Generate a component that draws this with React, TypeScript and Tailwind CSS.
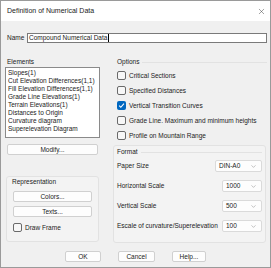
import { ChevronDown, X } from "lucide-react";

const elements = [
  "Slopes(1)",
  "Cut Elevation Differences(1,1)",
  "Fill Elevation Differences(1,1)",
  "Grade Line Elevations(1)",
  "Terrain Elevations(1)",
  "Distances to Origin",
  "Curvature diagram",
  "Superelevation Diagram",
];

const options = [
  { label: "Critical Sections", checked: false },
  { label: "Specified Distances", checked: false },
  { label: "Vertical Transition Curves", checked: true },
  { label: "Grade Line. Maximum and minimum heights", checked: false },
  { label: "Profile on Mountain Range", checked: false },
];

const formats = [
  { label: "Paper Size", value: "DIN-A0", wide: true },
  { label: "Horizontal Scale", value: "1000" },
  { label: "Vertical Scale", value: "500" },
  { label: "Escale of curvature/Superelevation", value: "100" },
];

function Check({ checked }: { checked?: boolean }) {
  if (checked) {
    return (
      <span className="flex h-[9px] w-[9px] shrink-0 items-center justify-center rounded-[2px] bg-[#0067c0]">
        <svg width="7" height="7" viewBox="0 0 8 8">
          <path d="M1.3 4.2 3.2 6 6.8 1.8" fill="none" stroke="white" strokeWidth="1.2" />
        </svg>
      </span>
    );
  }
  return <span className="h-[9px] w-[9px] shrink-0 rounded-[2px] border border-[#6a6a6a] bg-[#f7f7f7]" />;
}

function Button({ label, className }: { label: string; className: string }) {
  return (
    <div
      className={`flex items-center justify-center rounded-[2px] border border-[#d0d0d0] bg-[#fdfdfd] ${className}`}
    >
      {label}
    </div>
  );
}

function Select({ value, wide }: { value: string; wide?: boolean }) {
  return (
    <div
      className={`flex h-[12px] items-center justify-between rounded-[2px] border border-[#dadada] bg-[#fdfdfd] pl-[3px] pr-[4px] ${
        wide ? "w-[47px]" : "w-[40px]"
      }`}
    >
      <span>{value}</span>
      <ChevronDown size={7} strokeWidth={1.5} color="#777" />
    </div>
  );
}

export default function App() {
  return (
    <div
      className="flex h-[268px] w-[271px] flex-col overflow-hidden border border-[#9a9a9a] bg-[#f0f0f0] text-[6.5px] leading-[8px] text-[#222]"
      style={{ fontFamily: '"Liberation Sans", Arial, sans-serif' }}
    >
      {/* title bar */}
      <div className="flex h-[20px] shrink-0 items-center justify-between bg-white pl-[6px] pr-[4px] text-[7px]">
        <span>Definition of Numerical Data</span>
        <X size={9} strokeWidth={1.2} color="#333" />
      </div>

      {/* name */}
      <div className="mt-[12px] flex h-[10px] items-center pl-[6px] pr-[3px]">
        <span className="w-[20px]">Name</span>
        <div className="flex h-[10px] flex-1 items-center border border-[#7a7a7a] bg-white px-[1px]">
          Compound Numerical Data
          <span className="ml-[1px] h-[8px] w-px bg-black" />
        </div>
      </div>

      <div className="mt-[15px] flex">
        {/* left column */}
        <div className="ml-[4px] flex w-[95px] flex-col">
          <span className="pl-[2px]">Elements</span>
          <div className="mt-[1px] flex h-[71px] flex-col border border-[#8a8a8a] bg-white px-[2px] pt-[1px]">
            {elements.map((e) => (
              <span key={e} className="whitespace-nowrap">
                {e}
              </span>
            ))}
          </div>
          <Button label="Modify..." className="mx-[2px] mt-[6px] h-[11px]" />

          <div className="mx-[1px] mt-[21px] flex h-[66px] flex-col rounded-[3px] border border-[#e2e2e2] bg-[#f3f3f3] px-[6px] pt-[1px]">
            <span className="-ml-[1px]">Representation</span>
            <Button label="Colors..." className="mt-[5px] h-[11px]" />
            <Button label="Texts..." className="mt-[4px] h-[11px]" />
            <div className="mt-[6px] flex items-center gap-[3px]">
              <Check />
              <span>Draw Frame</span>
            </div>
          </div>
        </div>

        {/* right column */}
        <div className="ml-[13px] flex flex-1 flex-col pr-[3px]">
          <div className="flex items-center gap-[3px] pl-[4px]">
            <span>Options</span>
            <span className="h-px flex-1 bg-[#e2e2e2]" />
          </div>
          <div className="mt-[5px] flex flex-col gap-[6px] pl-[4px]">
            {options.map((o) => (
              <div key={o.label} className="flex h-[9px] items-center gap-[3px] whitespace-nowrap">
                <Check checked={o.checked} />
                <span>{o.label}</span>
              </div>
            ))}
          </div>

          <div className="mt-[5px] mr-[1px] flex h-[98px] flex-col rounded-[3px] border border-[#e2e2e2] bg-[#f3f3f3] pl-[3px] pr-[3px] pt-[2px]">
            <div className="flex items-center gap-[3px]">
              <span>Format</span>
              <span className="h-px flex-1 bg-[#e2e2e2]" />
            </div>
            <div className="mt-[4px] flex flex-col gap-[8px]">
              {formats.map((f) => (
                <div key={f.label} className="flex h-[12px] items-center justify-between whitespace-nowrap">
                  <span>{f.label}</span>
                  <Select value={f.value} wide={f.wide} />
                </div>
              ))}
            </div>
          </div>
        </div>
      </div>

      {/* buttons */}
      <div className="mt-[8px] flex h-[11px] pl-[64px]">
        <Button label="OK" className="h-[11px] w-[36px] border-[#0067c0]" />
        <Button label="Cancel" className="ml-[17px] h-[11px] w-[37px]" />
        <Button label="Help..." className="ml-[17px] h-[11px] w-[34px]" />
      </div>
    </div>
  );
}
